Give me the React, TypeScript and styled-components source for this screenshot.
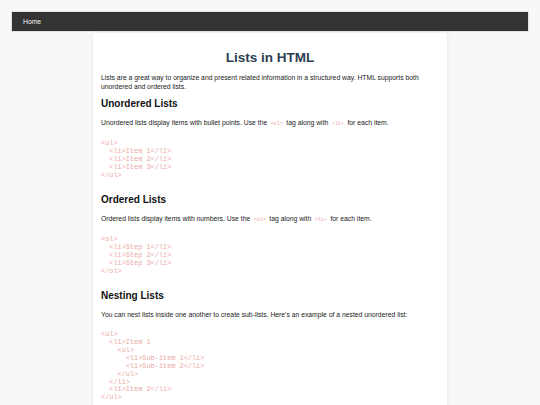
import React from 'react';
import styled, { createGlobalStyle } from 'styled-components';

const GlobalStyle = createGlobalStyle`
    html, body {
        margin: 0;
        padding: 0;
        background: #f8f8f8;
        font-family: "Liberation Sans", Arial, sans-serif;
        color: #222;
    }
`;

const Page = styled.div`
    padding: 11px 11px 0;
`;

const NavBar = styled.nav`
    display: flex;
    align-items: center;
    height: 21px;
    padding: 0 11px;
    background: #333;
    border: 1px solid #e4e4e4;
    box-sizing: border-box;
`;

const NavLink = styled.a`
    color: #f2f2f2;
    font-size: 6.8px;
    text-decoration: none;
`;

const Card = styled.main`
    width: 354px;
    margin: 1px auto 0;
    padding: 8px 8px 12px;
    box-sizing: border-box;
    background: #fff;
    border-radius: 3px;
    box-shadow: 0 0 4px rgba(0, 0, 0, 0.08);
`;

const Title = styled.h1`
    margin: 8px 0 6px;
    font-size: 13.5px;
    line-height: 18px;
    text-align: center;
    color: #2c3e50;
`;

const SectionTitle = styled.h2<{ $first?: boolean }>`
    margin: ${({ $first }) => ($first ? '6px' : '13.5px')} 0 6.5px;
    font-size: 10px;
    line-height: 14px;
    color: #111;
`;

const Text = styled.p`
    margin: 0;
    font-size: 6.8px;
    line-height: 9px;
    color: #222;
`;

const InlineCode = styled.code`
    padding: 0 1.8px;
    font-family: "Liberation Mono", "Courier New", monospace;
    font-size: 4.9px;
    color: #e8a09c;
`;

const CodeBlock = styled.pre`
    margin: 12.5px 0 0;
    font-family: "Liberation Mono", "Courier New", monospace;
    font-size: 6.9px;
    line-height: 7.9px;
    color: #eaa8a4;
`;

const sections = [
    {
        title: 'Unordered Lists',
        text: ['Unordered lists display items with bullet points. Use the ', '<ul>', ' tag along with ', '<li>', ' for each item.'],
        code: '<ul>\n  <li>Item 1</li>\n  <li>Item 2</li>\n  <li>Item 3</li>\n</ul>',
    },
    {
        title: 'Ordered Lists',
        text: ['Ordered lists display items with numbers. Use the ', '<ol>', ' tag along with ', '<li>', ' for each item.'],
        code: '<ol>\n  <li>Step 1</li>\n  <li>Step 2</li>\n  <li>Step 3</li>\n</ol>',
    },
    {
        title: 'Nesting Lists',
        text: ["You can nest lists inside one another to create sub-lists. Here's an example of a nested unordered list:"],
        code:
            '<ul>\n  <li>Item 1\n    <ul>\n      <li>Sub-item 1</li>\n      <li>Sub-item 2</li>\n    </ul>\n  </li>\n  <li>Item 2</li>\n</ul>',
    },
];

const App: React.FunctionComponent = () => (
    <>
        <GlobalStyle />
        <Page>
            <NavBar>
                <NavLink href="#">Home</NavLink>
            </NavBar>
            <Card>
                <Title>Lists in HTML</Title>
                <Text>
                    Lists are a great way to organize and present related information in a structured way. HTML supports
                    both unordered and ordered lists.
                </Text>
                {sections.map((section, sectionIndex) => (
                    <section key={section.title}>
                        <SectionTitle $first={sectionIndex === 0}>{section.title}</SectionTitle>
                        <Text>
                            {section.text.map((part, index) =>
                                index % 2 === 1 ? <InlineCode key={index}>{part}</InlineCode> : part
                            )}
                        </Text>
                        <CodeBlock>{section.code}</CodeBlock>
                    </section>
                ))}
            </Card>
        </Page>
    </>
);

export default App;
